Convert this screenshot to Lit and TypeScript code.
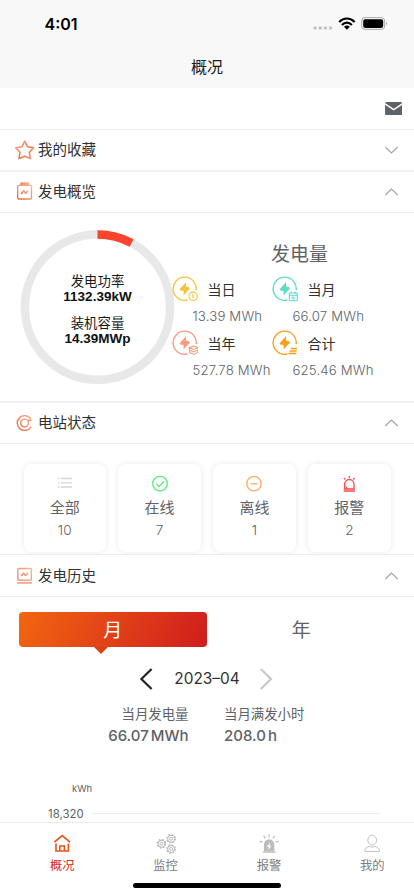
import { LitElement, html, css, svg, TemplateResult } from "lit";
import { customElement, property } from "lit/decorators.js";

const BOLT = "M14 6.2 L7.6 13.2 L8.4 14.6 L11.6 15 L11.6 19.4 L17.9 12.4 L17.2 11.2 L14 10.6 Z";

const sectionIcons: Record<string, TemplateResult> = {
  star: html`<svg width="22" height="22" viewBox="0 0 22 22" fill="none" stroke="url(#g1)" stroke-width="1.6" stroke-linejoin="round">
    <defs><linearGradient id="g1" x1="0" y1="0" x2="1" y2="1"><stop offset="0" stop-color="#f6b594"/><stop offset=".55" stop-color="#ec764b"/><stop offset="1" stop-color="#f0a07c"/></linearGradient></defs>
    <path d="M10.7 2.2 L13.4 7.7 L19.5 8.7 L15.3 13.2 L16.4 19.6 L10.7 17.3 L5 19.6 L6 13.2 L1.8 8.7 L8 7.7 Z"/></svg>`,
  battery: html`<svg width="22" height="22" viewBox="0 0 22 22" fill="none" stroke="url(#g2)" stroke-width="1.3" stroke-linejoin="round">
    <defs><linearGradient id="g2" x1="1" y1="0" x2="0" y2="1"><stop offset="0" stop-color="#f7b99b"/><stop offset="1" stop-color="#e9683c"/></linearGradient></defs>
    <path d="M7 4.4 V2 H14.6 V4.4" fill="#f3a583"/><rect x="3.7" y="4.4" width="13.8" height="13.6" rx="1.2"/>
    <path d="M7.2 13 L9.8 9.6 L11.7 12.2 L14.2 9.6" stroke-width="1.5"/></svg>`,
  target: html`<svg width="22" height="22" viewBox="0 0 22 22" fill="none" stroke="url(#g3)" stroke-width="1.4">
    <defs><linearGradient id="g3" x1="1" y1="0" x2="0" y2="1"><stop offset="0" stop-color="#f5ad8c"/><stop offset="1" stop-color="#e96c43"/></linearGradient></defs>
    <path d="M17 7.2 A7.4 7.4 0 1 0 17 14.8"/><circle cx="10.6" cy="11" r="3.9"/><path d="M14.4 8.2 A5 5 0 0 0 17.4 7.6"/></svg>`,
  history: html`<svg width="22" height="22" viewBox="0 0 22 22" fill="none" stroke="url(#g4)" stroke-width="1.3" stroke-linejoin="round">
    <defs><linearGradient id="g4" x1="1" y1="0" x2="0" y2="1"><stop offset="0" stop-color="#f6b294"/><stop offset="1" stop-color="#ed8059"/></linearGradient></defs>
    <rect x="3.8" y="3.5" width="13.6" height="11.6" rx="1"/><path d="M7.2 11 L9.5 8 L11.5 10.4 L14.2 7.7" stroke-width="1.5"/>
    <path d="M3.2 17.9 H17.9" stroke="#f4aa8a" stroke-width="1.8"/></svg>`,
};

@customElement("section-head")
class SectionHead extends LitElement {
  @property() label = "";
  @property() icon = "star";
  @property({ type: Boolean }) open = false;
  static styles = css`
    :host { display: flex; align-items: center; height: 100%; padding: 0 15px 0 14px; box-sizing: border-box; }
    .icon { display: flex; width: 24px; flex: none; }
    .label { flex: 1; font-size: 14.5px; line-height: 20px; color: #303133; }
    .arrow { display: flex; }
  `;
  render() {
    return html`<span class="icon">${sectionIcons[this.icon]}</span>
      <span class="label">${this.label}</span>
      <svg class="arrow" width="15" height="10" viewBox="0 0 15 10" fill="none" stroke="#a2a4a9" stroke-width="1.1">
        <path d=${this.open ? "M1.3 8 L7.5 2 L13.7 8" : "M1.3 2 L7.5 8 L13.7 2"} />
      </svg>`;
  }
}

const energy = [
  { label: "当日", value: "13.39 MWh", color: "#f8c33c", extra: svg`<circle cx="21.1" cy="20.3" r="4.2"/><path d="M20.8 18 V20.7 L22 21.7"/>` },
  { label: "当月", value: "66.07 MWh", color: "#5fdcc8", extra: svg`<rect x="17.3" y="17" width="8" height="7.8" rx=".8"/><path d="M17.3 19.2 H25.3 M19.3 15.8 V17.6 M23.3 15.8 V17.6 M19.3 21.2 H23.3 M19.8 23 H22.8"/>` },
  { label: "当年", value: "527.78 MWh", color: "#fb9a7c", extra: svg`<path d="M21.7 15.9 L26 17.7 L21.7 19.5 L17.4 17.7 Z M17.4 20 L21.7 21.9 L26 20 M17.4 22.4 L21.7 24.4 L26 22.4 M17.4 17.7 V22.4 M26 17.7 V22.4"/>` },
  { label: "合计", value: "625.46 MWh", color: "#f9a01b", extra: svg`<path d="M18.8 18.5 H25 M17.5 21 H24.7 M16.5 23.5 H24.4" stroke-width="1.3"/>` },
];

const statuses = [
  { label: "全部", value: "10", icon: svg`<g stroke="#d6d6d6" stroke-width="1.3"><path d="M5.8 4.5 H17 M5.8 8.8 H17 M5.8 13 H17"/><path d="M2.8 4.5 H4.6 M2.8 8.8 H4.6 M2.8 13 H4.6"/></g>` },
  { label: "在线", value: "7", icon: svg`<g stroke="#5bea7c" stroke-width="1.3"><circle cx="10" cy="9.6" r="7.3"/><path d="M6.2 9.7 L9.1 12.6 L14.1 7.2"/></g>` },
  { label: "离线", value: "1", icon: svg`<g stroke="#fbae66" stroke-width="1.3"><circle cx="10" cy="9.6" r="7.2"/><path d="M6.6 9.8 H13.6"/></g>` },
  { label: "报警", value: "2", icon: svg`<g stroke="#f94a4c" stroke-width="1.3"><path d="M5.6 15 V10.2 A4.7 4.7 0 0 1 15 10.2 V15 M4.7 15 H15.9 M4.7 17 H15.9 M10.3 2 V4 M4.9 4 L6.4 5.4 M15.7 4 L14.2 5.4 M7.8 12.4 V14.6"/></g>` },
];

const gear = (x: number, y: number) => svg`<g transform="translate(${x} ${y})">
  <circle r="4.3" stroke-width="1.1" stroke-dasharray="1.69 1.69"/><circle r="3.5" stroke-width="1"/><circle r="1.5" stroke-width=".9"/></g>`;

const tabs = [
  { label: "概况", icon: svg`<g stroke="#e5531a" stroke-width="1.6"><path d="M3.4 9.2 L11.2 2.6 L19 9.2"/><path d="M5 10.6 V18 H8.8 V13 H13.4 V18 H17.4 V10.6 M8.8 18 H13.4"/></g>` },
  { label: "监控", icon: svg`<g stroke="#b4b4b4">${gear(6.5, 10.8)}${gear(16.1, 5.7)}${gear(16.1, 16)}</g>` },
  { label: "报警", icon: svg`<g stroke="#bcbcbc" stroke-width="1.2"><path d="M5.9 18.5 V11.5 A5.2 5.2 0 0 1 16.3 11.5 V18.5 Z" fill="#bcbcbc" stroke="none"/><path d="M4.6 19.2 H17.8 M11.1 1.2 V4.4 M5.6 2.8 L7.2 5.4 M16.6 2.8 L15 5.4 M1.6 8 L4.6 9.1 M20.6 8 L17.6 9.1"/><path d="M11.9 9.2 L8.9 13.8 H10.8 L10.3 17 L13.4 12.7 H11.4 Z" fill="#fff" stroke="none"/></g>` },
  { label: "我的", icon: svg`<g stroke="#c4c4c4" stroke-width="1"><ellipse cx="11.2" cy="7.2" rx="4.4" ry="4.9"/><path d="M3.6 18.4 C3.6 15.6 5.8 14 8.2 13.5 C10 14.2 12.2 14.2 14 13.5 C16.4 14 18.7 15.6 18.7 18.4 Z"/></g>` },
];

@customElement("app-root")
class AppRoot extends LitElement {
  static styles = css`
    :host {
      display: flex; flex-direction: column; width: 414px; height: 896px; overflow: hidden;
      background: #fff; color: #606266; font-family: Inter, "Noto Sans CJK SC", sans-serif;
    }
    * { box-sizing: border-box; }
    svg { display: block; flex: none; }
    .status { height: 44px; flex: none; background: #f8f8f8; display: flex; align-items: center; padding: 4px 27px 0 44.5px; }
    .time { flex: 1; font-size: 16px; font-weight: 600; color: #000; line-height: 20px; letter-spacing: 0; }
    .nav { height: 44px; flex: none; background: #f8f8f8; text-align: center; font-size: 16px; line-height: 46px; color: #1a1a1a; }
    .tools { height: 41px; flex: none; display: flex; justify-content: flex-end; align-items: center; padding-right: 12px; }
    .head { flex: none; border-top: 1px solid #ebebeb; }
    .head.fav { height: 41px; }
    .head.two { height: 43px; border-top: 2px solid #f2f2f3; border-bottom: 1px solid #ebebeb; }
    .head.hist { height: 43px; border-bottom: 1px solid #ebebeb; }
    .overview { height: 188px; flex: none; display: flex; }
    .dial { width: 172px; flex: none; display: grid; }
    .dial > * { grid-area: 1 / 1; }
    .dial svg { margin: 16px -6px 0 19px; }
    .dialtext { padding-left: 23px; padding-top: 61px; text-align: center; font: 13.4px/15px "Liberation Sans", "Noto Sans CJK SC", sans-serif; color: #1a1a1a; }
    .dialtext p { margin: 0 0 12px; line-height: 15px; }
    .dialtext b { display: block; font-size: 13.5px; color: #111; }
    .energy { flex: 1; }
    .energy h2 { margin: 0; width: 255px; height: 63px; padding-top: 28px; text-align: center; font-size: 19px; line-height: 28px; font-weight: 400; }
    .grid { display: grid; grid-template-columns: 100px 120px; }
    .item { height: 54px; }
    .itemhead { height: 26px; display: flex; align-items: center; gap: 9.5px; font-size: 14px; color: #303133; }
    .num { padding-left: 20.5px; font-size: 13.2px; line-height: 28px; font-weight: 300; letter-spacing: .16px; white-space: nowrap; }
    .cards { height: 110px; flex: none; padding: 20px 23.5px 0; display: flex; gap: 12.6px; }
    .card { flex: 1; height: 87.5px; border-radius: 8px; box-shadow: 0 0 6px rgba(0,0,0,.09); display: flex; flex-direction: column; align-items: center; padding-top: 10px; }
    .name { font-size: 15px; line-height: 22px; margin-top: 3px; }
    .count { font-size: 13.6px; line-height: 22px; font-weight: 300; }
    .switch { display: flex; flex: none; height: 50px; padding: 15px 18.5px 0; }
    .opt { flex: 1; height: 35px; line-height: 37px; text-align: center; font-size: 19px; border-radius: 4px; position: relative; }
    .opt.on { color: #fff; background: linear-gradient(115deg, #f26611, #cf1d1d); }
    .opt.on::after { content: ""; position: absolute; left: 75.5px; top: 34.5px; border: 7.5px solid transparent; border-top-color: #e0400f; border-bottom: 0; }
    .date { height: 63px; flex: none; display: flex; align-items: center; padding-left: 139px; color: #303133; }
    .day { width: 105px; text-align: center; font-size: 15.4px; font-weight: 400; margin: 0 1px; line-height: 24px; padding-left: 1px; }
    .sums { display: flex; flex: none; gap: 35.5px; height: 72px; margin-top: -6px; }
    .sum:first-child { width: 188.5px; text-align: right; }
    .sum { font-size: 13.4px; line-height: 20px; }
    .sum strong { display: block; font-size: 15px; line-height: 22px; font-weight: 500; margin-top: 1px; }
    .sum i { font-style: normal; margin-left: 2px; }
    .chart { flex: none; height: 46px; font-size: 9.5px; line-height: 12px; }
    .unit { padding: 7px 0 0 72px; }
    .tick { display: flex; align-items: center; gap: 8px; padding: 10px 34px 0 48px; font-size: 11.4px; line-height: 16px; height: 27px; }
    .tick hr { flex: 1; margin: 0; border: 0; height: 1.5px; background: #e9ebf6; }
    .tabs { flex: none; height: 74px; border-top: 1px solid #ebebeb; background: #fff; display: flex; padding-left: 10.5px; position: relative; }
    .tab { width: 103.4px; flex: none; display: flex; flex-direction: column; align-items: center; padding-top: 10px; font-size: 12.3px; line-height: 18px; gap: 2px; color: #7a7e83; }
    .tab.on { color: #d9281e; }
    .home { position: absolute; left: 133px; bottom: 8px; width: 148px; height: 5px; border-radius: 3px; background: #000; }
  `;
  render() {
    return html`
      <div class="status">
        <span class="time">4:01</span>
        <svg width="74" height="16" viewBox="0 0 74 16">
          <g fill="#c4c4c4"><circle cx="2" cy="12" r="1.8"/><circle cx="7.2" cy="12" r="1.8"/><circle cx="12.4" cy="12" r="1.8"/><circle cx="17.6" cy="12" r="1.8"/></g>
          <g fill="none" stroke="#000" stroke-width="2.1"><path d="M26.2 6 C30.6 1.4 37.2 1.4 41.6 6"/><path d="M28.9 8.9 C31.9 5.8 35.9 5.8 38.9 8.9"/></g>
          <path d="M31 10.8 C32.7 9.2 35.1 9.2 36.8 10.8 L33.9 13.8 Z"/>
          <rect x="48.7" y="1.6" width="23" height="11.8" rx="3.4" fill="none" stroke="#a8a8a8"/>
          <rect x="50.2" y="3.2" width="20" height="8.7" rx="1.8"/><path d="M73 5.8 Q74.8 7.5 73 9.2 Z" fill="#a8a8a8"/>
        </svg>
      </div>
      <div class="nav">概况</div>
      <div class="tools">
        <svg width="17.5" height="13.5" viewBox="0 0 18 14"><rect width="18" height="14" rx="1.8" fill="#5f6168"/><path d="M0 1.9 L9 7.9 L18 1.9" fill="none" stroke="#fff" stroke-width="1.5"/></svg>
      </div>
      <div class="head fav"><section-head label="我的收藏" icon="star"></section-head></div>
      <div class="head two"><section-head label="发电概览" icon="battery" open></section-head></div>
      <div class="overview">
        <div class="dial">
          <svg width="156" height="158" viewBox="0 0 156 158" fill="none" stroke-width="8.5">
            <circle cx="78.5" cy="78.2" r="72.6" stroke="#e8e8e8"/>
            <path d="M78.5 5.6 A72.6 72.6 0 0 1 112.6 14.1" stroke="#f8452d"/>
          </svg>
          <div class="dialtext"><p>发电功率<b>1132.39kW</b></p><p>装机容量<b>14.39MWp</b></p></div>
        </div>
        <div class="energy">
          <h2>发电量</h2>
          <div class="grid">${energy.map((e) => html`<div class="item">
            <div class="itemhead">
              <svg width="26" height="26" viewBox="0 0 26 26" fill="none" stroke=${e.color} stroke-width="1.1">
                <path d="M24.2 14.2 A11.6 11.6 0 1 0 15.4 24" stroke-width="1.4"/>
                <path d=${BOLT} fill=${e.color} stroke="none"/>${e.extra}
              </svg>${e.label}
            </div>
            <div class="num">${e.value}</div></div>`)}</div>
        </div>
      </div>
      <div class="head two"><section-head label="电站状态" icon="target" open></section-head></div>
      <div class="cards">${statuses.map((s) => html`<div class="card">
        <svg width="20" height="20" viewBox="0 0 20 20" fill="none">${s.icon}</svg>
        <span class="name">${s.label}</span><span class="count">${s.value}</span></div>`)}</div>
      <div class="head hist"><section-head label="发电历史" icon="history" open></section-head></div>
      <div class="switch"><div class="opt on">月</div><div class="opt">年</div></div>
      <div class="date">
        <svg width="14" height="22" viewBox="0 0 14 22" fill="none" stroke="#222" stroke-width="2.2"><path d="M12.6 1 L2.4 11 L12.6 21"/></svg>
        <span class="day">2023–04</span>
        <svg width="14" height="22" viewBox="0 0 14 22" fill="none" stroke="#c8c8c8" stroke-width="2.2"><path d="M.8 1 L11 11 L.8 21"/></svg>
      </div>
      <div class="sums">
        <div class="sum">当月发电量<strong>66.07<i>MWh</i></strong></div>
        <div class="sum">当月满发小时<strong>208.0<i>h</i></strong></div>
      </div>
      <div class="chart"><div class="unit">kWh</div><div class="tick"><span>18,320</span><hr /></div></div>
      <div class="tabs">${tabs.map((t, i) => html`<div class="tab ${i === 0 ? "on" : ""}">
        <svg width="22" height="22" viewBox="0 0 22 22" fill="none">${t.icon}</svg><span>${t.label}</span></div>`)}
        <div class="home"></div>
      </div>
    `;
  }
}
